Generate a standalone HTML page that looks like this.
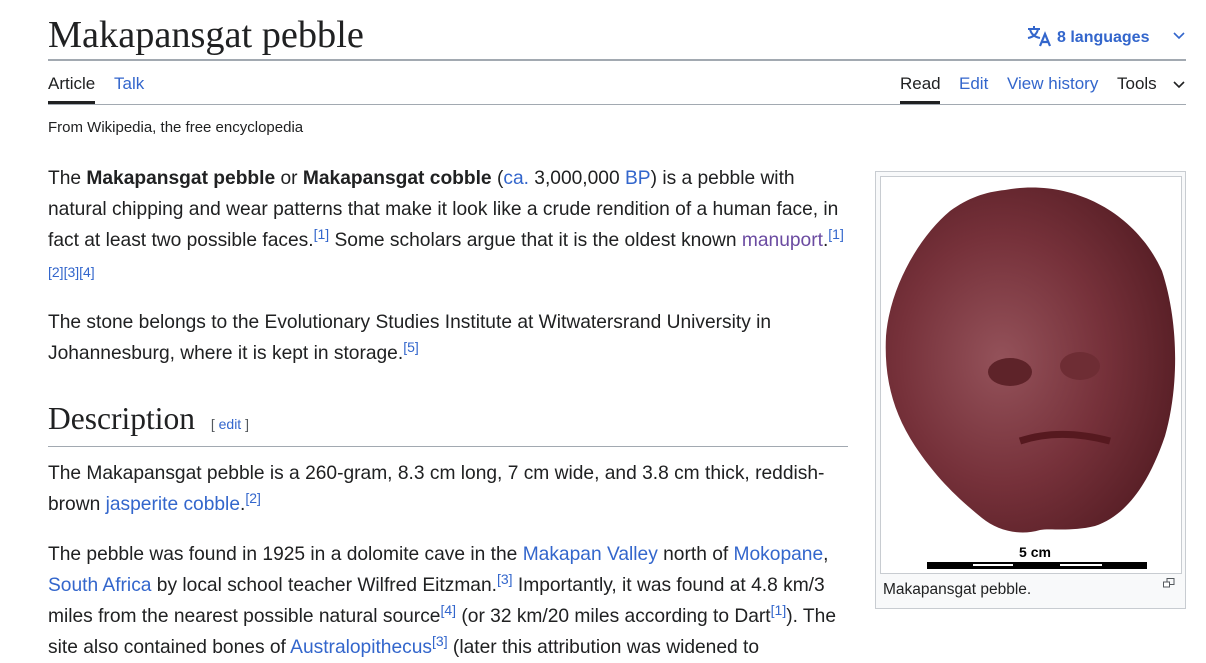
<!DOCTYPE html>
<html><head><style>
body{margin:0;background:#fff;font-family:"Liberation Sans",sans-serif;color:#202122;width:1206px;height:650px;overflow:hidden;position:relative}
a{color:#3366cc;text-decoration:none}
.abs{position:absolute}
h1{position:absolute;left:48px;top:13px;margin:0;font:normal 38.3px "Liberation Serif",serif;color:#202122}
.line{position:absolute;height:1px;background:#a2a9b1}
.tab{position:absolute;top:74px;font-size:17px}
.p{position:absolute;left:48px;width:800px;font-size:19.2px;line-height:31px}
sup{font-size:14px;line-height:0;vertical-align:7px}
.fig{position:absolute;left:875px;top:171px;width:311px;height:438px;border:1px solid #c8ccd1;background:#f8f9fa;box-sizing:border-box}
</style></head><body>
<h1>Makapansgat pebble</h1>
<div class="abs" style="left:1027px;top:25px;color:#3366cc;font-weight:bold;font-size:16px">
<svg width="26" height="22" viewBox="0 0 26 22" style="vertical-align:-5px;margin-right:4px"><path d="M1 4h12M7 1v3M3 4c1 5 5 8 10 9M11 4c-1 5-5 8-10 9" stroke="#3366cc" stroke-width="2" fill="none"/><path d="M13 21l5-12 5 12M15 17h6" stroke="#3366cc" stroke-width="2.2" fill="none"/></svg>8 languages</div>
<svg class="abs" style="left:1173px;top:32px" width="12" height="8"><path d="M1 1l5 5 5-5" stroke="#3366cc" stroke-width="1.6" fill="none"/></svg>
<div class="line" style="left:48px;top:59px;width:1138px;height:2px"></div>
<div class="tab" style="left:48px">Article</div>
<div class="abs" style="left:48px;top:101px;width:47px;height:3px;background:#202122"></div>
<div class="tab" style="left:114px"><a>Talk</a></div>
<div class="tab" style="left:900px">Read</div>
<div class="abs" style="left:900px;top:101px;width:40px;height:3px;background:#202122"></div>
<div class="tab" style="left:959px"><a>Edit</a></div>
<div class="tab" style="left:1007px"><a>View history</a></div>
<div class="tab" style="left:1117px">Tools</div>
<svg class="abs" style="left:1173px;top:81px" width="12" height="8"><path d="M1 1l5 5 5-5" stroke="#202122" stroke-width="1.6" fill="none"/></svg>
<div class="line" style="left:48px;top:104px;width:1138px"></div>
<div class="abs" style="left:48px;top:119px;font-size:15px">From Wikipedia, the free encyclopedia</div>
<div class="p" style="top:163px">The <b>Makapansgat pebble</b> or <b>Makapansgat cobble</b> (<a>ca.</a> 3,000,000 <a>BP</a>) is a pebble with natural chipping and wear patterns that make it look like a crude rendition of a human face, in fact at least two possible faces.<sup><a>[1]</a></sup> Some scholars argue that it is the oldest known <a style="color:#6b4ba1">manuport</a>.<sup><a>[1]</a></sup><br><sup style="vertical-align:0"><a>[2][3][4]</a></sup></div>
<div class="p" style="top:307px">The stone belongs to the Evolutionary Studies Institute at Witwatersrand University in Johannesburg, where it is kept in storage.<sup><a>[5]</a></sup></div>
<div class="abs" style="left:48px;top:401px;font:31.5px 'Liberation Serif',serif">Description <span style="font:14px 'Liberation Sans',sans-serif;color:#54595d;margin-left:8px">[ <a>edit</a> ]</span></div>
<div class="line" style="left:48px;top:446px;width:800px"></div>
<div class="p" style="top:458px">The Makapansgat pebble is a 260-gram, 8.3 cm long, 7 cm wide, and 3.8 cm thick, reddish-brown <a>jasperite cobble</a>.<sup><a>[2]</a></sup></div>
<div class="p" style="top:539px">The pebble was found in 1925 in a dolomite cave in the <a>Makapan Valley</a> north of <a>Mokopane</a>, <a>South Africa</a> by local school teacher Wilfred Eitzman.<sup><a>[3]</a></sup> Importantly, it was found at 4.8 km/3 miles from the nearest possible natural source<sup><a>[4]</a></sup> (or 32 km/20 miles according to Dart<sup><a>[1]</a></sup>). The site also contained bones of <a>Australopithecus</a><sup><a>[3]</a></sup> (later this attribution was widened to</div>
<div class="fig">
<svg class="abs" style="left:4px;top:4px" width="302" height="398" viewBox="0 0 302 398">
<rect x="0.5" y="0.5" width="301" height="397" fill="#fff" stroke="#c8ccd1"/>
<defs><radialGradient id="g" cx="0.4" cy="0.5" r="0.65"><stop offset="0" stop-color="#94525a"/><stop offset="0.55" stop-color="#76313a"/><stop offset="1" stop-color="#551d24"/></radialGradient></defs>
<path d="M125 14C190 2 255 35 282 95C300 150 298 215 285 260C268 310 245 340 215 350C190 356 170 352 160 354C140 360 118 355 102 342C75 320 55 300 35 270C12 235 4 200 6 160C10 110 40 60 70 35C88 22 105 16 125 14Z" fill="url(#g)"/>
<ellipse cx="130" cy="196" rx="22" ry="14" fill="#5e2329"/><ellipse cx="200" cy="190" rx="20" ry="14" fill="#6e2d34"/>
<path d="M140 265c30-10 60-8 90 0" stroke="#56191f" stroke-width="7" fill="none"/>
<text x="155" y="381" font-family="Liberation Sans" font-weight="bold" font-size="14" text-anchor="middle" fill="#000">5 cm</text>
<rect x="47" y="386" width="220" height="7" fill="#000"/><rect x="93" y="388" width="40" height="2" fill="#fff"/><rect x="180" y="388" width="42" height="2" fill="#fff"/>
</svg>
<div class="abs" style="left:7px;top:409px;font-size:15.5px">Makapansgat pebble.</div>
<svg class="abs" style="left:287px;top:406px" width="12" height="10"><rect x="4" y="0.5" width="7" height="6" fill="none" stroke="#54595d"/><rect x="0.5" y="4" width="6" height="5" fill="#fff" stroke="#54595d"/></svg>
</div>
</body></html>
